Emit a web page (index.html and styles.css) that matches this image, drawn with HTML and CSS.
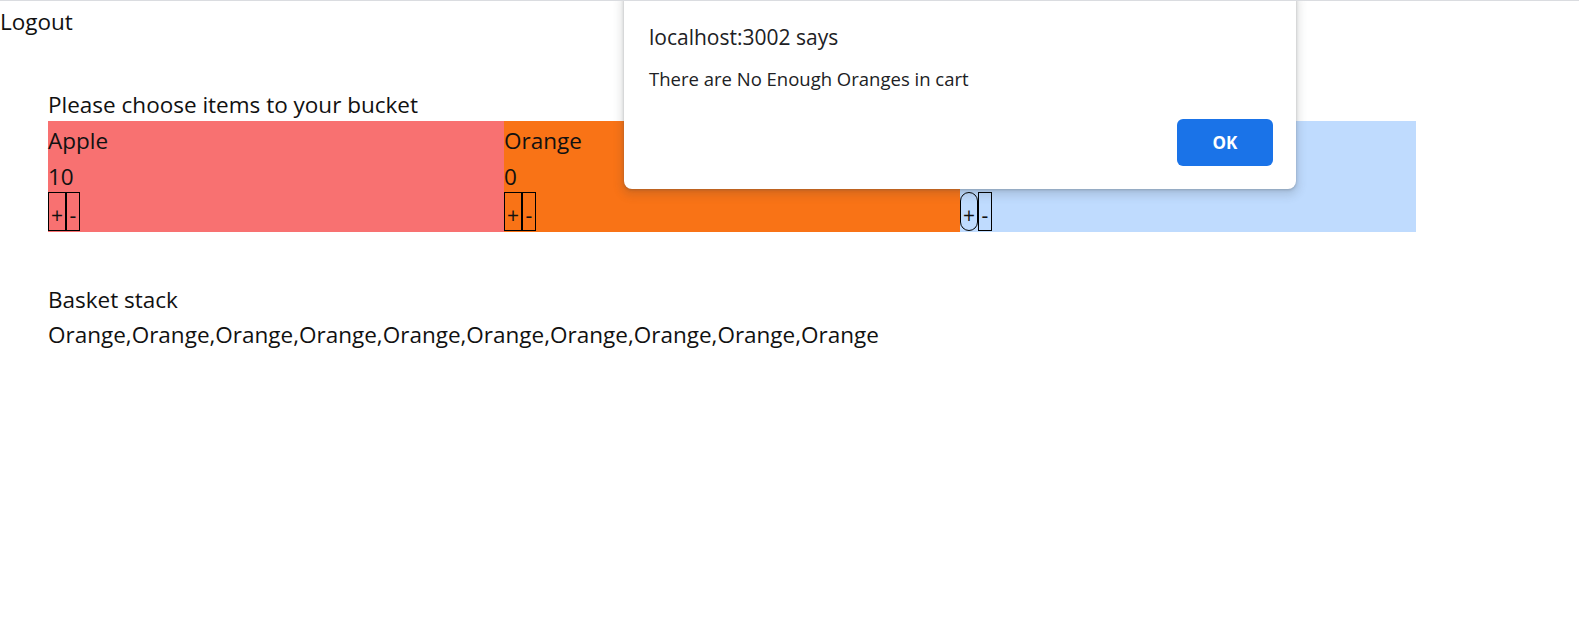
FILE: index.html
```html
<!DOCTYPE html>
<html lang="en">
<head>
<meta charset="utf-8">
<title>Bucket</title>
<link rel="stylesheet" href="styles.css">
</head>
<body>
<div class="page">
  <div class="logout">Logout</div>
  <main class="shop">
    <p class="title">Please choose items to your bucket</p>
    <div class="grid">
      <div class="cell cell-apple">
        <div class="name">Apple</div>
        <div class="count">10</div>
        <div class="controls"><button class="btn btn-plus">+</button><button class="btn btn-minus">-</button></div>
      </div>
      <div class="cell cell-orange">
        <div class="name">Orange</div>
        <div class="count">0</div>
        <div class="controls"><button class="btn btn-plus">+</button><button class="btn btn-minus">-</button></div>
      </div>
      <div class="cell cell-blue">
        <div class="name">&nbsp;</div>
        <div class="count">&nbsp;</div>
        <div class="controls"><button class="btn btn-plus btn-round">+</button><button class="btn btn-minus">-</button></div>
      </div>
    </div>
    <div class="basket">
      <p class="basket-title">Basket stack</p>
      <p class="basket-list">Orange,Orange,Orange,Orange,Orange,Orange,Orange,Orange,Orange,Orange</p>
    </div>
  </main>
</div>
<div class="dialog">
  <div class="dialog-title">localhost:3002 says</div>
  <div class="dialog-msg">There are No Enough Oranges in cart</div>
  <div class="dialog-actions"><button class="dialog-ok">OK</button></div>
</div>
</body>
</html>
```
FILE: styles.css
```css
html, body {
  margin: 0;
  padding: 0;
  background: #fff;
}
body {
  border-top: 1px solid #dadce0;
  font-family: "Open Sans", "Noto Sans", sans-serif;
  font-size: 22.5px;
  line-height: 35px;
  color: #111;
  position: relative;
  min-height: 627px;
}
.logout {
  height: 35px;
  box-sizing: border-box;
  padding-top: 3px;
}
.shop {
  padding: 50px 0 0 48px;
}
.title {
  margin: 0;
  padding-top: 1px;
  height: 35px;
  box-sizing: border-box;
}
.grid {
  display: grid;
  grid-template-columns: repeat(3, 456px);
}
.cell {
  display: flex;
  flex-direction: column;
}
.cell-apple { background: #f87171; }
.cell-orange { background: #f97316; }
.cell-blue { background: #bfdbfe; }
.name, .count {
  height: 35px;
  box-sizing: border-box;
  padding-top: 2px;
}
.count {
  padding-top: 3px;
}
.controls {
  display: flex;
  height: 40px;
  padding-top: 1px;
}
.btn {
  font-family: inherit;
  font-size: 21px;
  color: #111;
  background: transparent;
  border: 1px solid #000;
  margin: 0;
  padding: 7px 0 0;
  height: 39px;
  line-height: 30px;
}
.btn-plus { width: 18px; }
.btn-minus { width: 14px; }
.btn-round { border-radius: 9px; }
.basket {
  margin-top: 50px;
}
.basket p {
  margin: 0;
}
.dialog {
  position: absolute;
  top: -10px;
  left: 624px;
  width: 672px;
  height: 198px;
  box-sizing: border-box;
  padding: 32px 23px 23px 25px;
  background: #fff;
  border-radius: 8px;
  box-shadow: 0 1px 3px rgba(60,64,67,.3), 0 4px 8px 3px rgba(60,64,67,.15);
  display: flex;
  flex-direction: column;
  font-family: "Open Sans", "Noto Sans", sans-serif;
  color: #202124;
}
.dialog-title {
  font-size: 21px;
  line-height: 28px;
}
.dialog-msg {
  margin-top: 16px;
  font-size: 18.5px;
  line-height: 24px;
}
.dialog-actions {
  margin-top: auto;
  display: flex;
  justify-content: flex-end;
}
.dialog-ok {
  width: 96px;
  height: 47px;
  border: 0;
  border-radius: 6px;
  background: #1a73e8;
  color: #fff;
  font-family: inherit;
  font-weight: 700;
  font-size: 17px;
}
```
